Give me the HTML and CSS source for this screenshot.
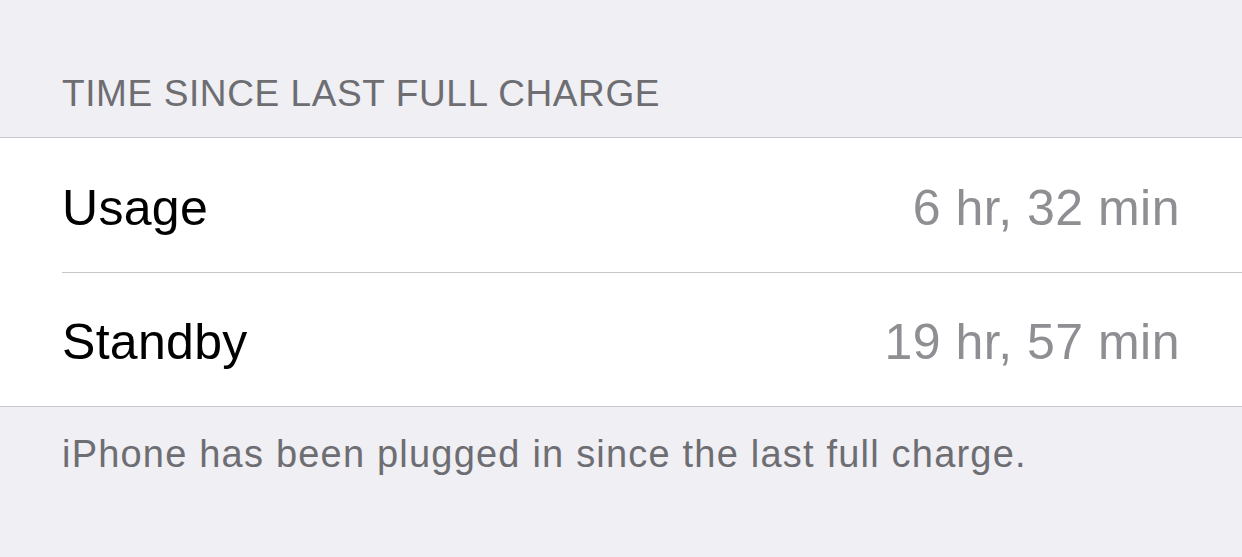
FILE: index.html
```html
<!DOCTYPE html>
<html lang="en">
<head>
    <meta charset="UTF-8">
    <meta name="viewport" content="width=device-width, initial-scale=1.0">
    <title>Battery</title>
    <link rel="stylesheet" href="styles.css">
</head>
<body>
    <div class="section-header">TIME SINCE LAST FULL CHARGE</div>

    <div class="group">
        <div class="row">
            <span class="label">Usage</span>
            <span class="value">6 hr, 32 min</span>
        </div>
        <div class="row">
            <span class="label">Standby</span>
            <span class="value">19 hr, 57 min</span>
        </div>
    </div>

    <div class="section-footer">iPhone has been plugged in since the last full charge.</div>
</body>
</html>
```

FILE: styles.css
```css
body {
    font-family: "Liberation Sans", Arial, sans-serif;
    margin: 0;
    padding: 0;
    background-color: #efeff4;
    width: 1242px;
    height: 557px;
    overflow: hidden;
}
.section-header {
    height: 137px;
    box-sizing: border-box;
    padding: 72px 62px 0;
    font-size: 37px;
    line-height: 44px;
    letter-spacing: 0.6px;
    color: #6d6d72;
}
.group {
    background-color: #fff;
    border-top: 1px solid #c8c7cc;
    border-bottom: 1px solid #c8c7cc;
}
.row {
    display: flex;
    justify-content: space-between;
    align-items: center;
    height: 134px;
    box-sizing: border-box;
    padding-top: 5px;
    margin-left: 62px;
    padding-right: 62px;
    font-size: 50px;
}
.row + .row {
    border-top: 1px solid #c8c7cc;
}
.label {
    color: #000;
    letter-spacing: 0.3px;
}
.value {
    color: #8e8e93;
    letter-spacing: 0.5px;
}
.section-footer {
    padding: 25px 62px 0;
    font-size: 38px;
    line-height: 44px;
    letter-spacing: 1.2px;
    color: #6d6d72;
}
```
